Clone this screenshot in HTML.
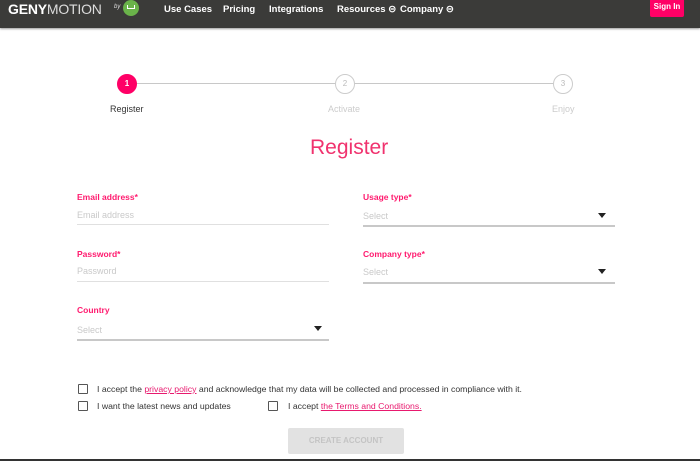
<!DOCTYPE html>
<html><head><meta charset="utf-8"><style>
*{margin:0;padding:0;box-sizing:border-box}
body{width:700px;height:461px;overflow:hidden;background:#fff;font-family:"Liberation Sans",sans-serif;position:relative}
.a{position:absolute;white-space:nowrap}
.nav{position:absolute;left:0;top:0;width:700px;height:28px;background:#3b3b39;box-shadow:0 1px 2px rgba(0,0,0,.4)}
.nl{color:#fff;font-weight:bold;font-size:9.5px;top:4px}
.lbl{color:#ff1a6e;font-size:8.5px;font-weight:bold}
.ph{color:#c9c9c9;font-size:9px}
.line{position:absolute;height:1px;background:#e0e0e0}
.sline{position:absolute;height:2px;background:#c8c8c8}
.arr{position:absolute;width:0;height:0;border-left:4.5px solid transparent;border-right:4.5px solid transparent;border-top:5px solid #222}
.cb{position:absolute;width:10px;height:10px;border:1.3px solid #555;border-radius:1px}
.t{font-size:8.7px;color:#333}
.pk{color:#e8196e;text-decoration:underline}
.c{position:absolute;width:20px;height:20px;border-radius:50%;border:1.5px solid #ccc;background:#fff;color:#bbb;font-size:8px;text-align:center;line-height:17px}
</style></head><body>
<div class="nav"></div>
<div class="a" style="left:8px;top:1px;color:#fff;font-size:14px;letter-spacing:-.2px"><b>GENY</b><span style="color:#ddd">MOTION</span></div>
<div class="a" style="left:114px;top:4px;color:#ddd;font-size:6px;font-style:italic">by</div>
<div class="a" style="left:123px;top:0px;width:16px;height:16px;border-radius:50%;background:#6ab34a"></div>
<div class="a" style="left:127px;top:5px;width:8px;height:4px;border:1.5px solid #fff;border-top:none"></div>
<div class="a nl" style="left:164px">Use Cases</div>
<div class="a nl" style="left:223px">Pricing</div>
<div class="a nl" style="left:269px">Integrations</div>
<div class="a nl" style="left:337px">Resources ⊝</div>
<div class="a nl" style="left:400px">Company ⊝</div>
<div class="a" style="left:650px;top:0;width:34px;height:17px;background:#ff0066;border-radius:0 0 2px 2px;color:#fff;font-size:8px;font-weight:bold;text-align:center;line-height:13px">Sign In</div>

<div class="a" style="left:127px;top:83px;width:436px;height:1px;background:#c8c8c8"></div>
<div class="c" style="left:117px;top:74px;background:#ff0066;border-color:#ff0066;color:#fff;font-weight:bold">1</div>
<div class="c" style="left:335px;top:74px">2</div>
<div class="c" style="left:553px;top:74px">3</div>
<div class="a" style="left:110px;top:104px;font-size:9px;color:#333">Register</div>
<div class="a" style="left:328px;top:104px;font-size:9px;color:#ccc">Activate</div>
<div class="a" style="left:552px;top:104px;font-size:9px;color:#ccc">Enjoy</div>
<div class="a" style="left:310px;top:136px;font-size:21px;color:#f0326e">Register</div>

<div class="a lbl" style="left:77px;top:192px">Email address*</div>
<div class="a ph" style="left:77px;top:210px">Email address</div>
<div class="line" style="left:77px;top:224px;width:252px"></div>
<div class="a lbl" style="left:77px;top:249px">Password*</div>
<div class="a ph" style="left:77px;top:266px">Password</div>
<div class="line" style="left:77px;top:281px;width:252px"></div>
<div class="a lbl" style="left:77px;top:305px">Country</div>
<div class="a ph" style="left:77px;top:325px">Select</div>
<div class="arr" style="left:314px;top:326px"></div>
<div class="sline" style="left:77px;top:339px;width:252px;height:1.5px"></div>

<div class="a lbl" style="left:363px;top:192px">Usage type*</div>
<div class="a ph" style="left:363px;top:211px">Select</div>
<div class="arr" style="left:598px;top:213px"></div>
<div class="sline" style="left:363px;top:225px;width:252px"></div>
<div class="a lbl" style="left:363px;top:249px">Company type*</div>
<div class="a ph" style="left:363px;top:267px">Select</div>
<div class="arr" style="left:598px;top:269px"></div>
<div class="sline" style="left:363px;top:282px;width:252px"></div>

<div class="cb" style="left:78px;top:384px"></div>
<div class="a t" style="left:97px;top:384px">I accept the <span class="pk">privacy policy</span> and acknowledge that my data will be collected and processed in compliance with it.</div>
<div class="cb" style="left:78px;top:401px"></div>
<div class="a t" style="left:97px;top:401px">I want the latest news and updates</div>
<div class="cb" style="left:268px;top:401px"></div>
<div class="a t" style="left:288px;top:401px">I accept <span class="pk">the Terms and Conditions.</span></div>

<div class="a" style="left:288px;top:428px;width:116px;height:26px;background:#e2e2e2;border-radius:2px;color:#c4c4c4;font-size:8px;font-weight:bold;text-align:center;line-height:26px">CREATE ACCOUNT</div>
<div class="a" style="left:0;top:459px;width:700px;height:2px;background:#333"></div>
</body></html>
